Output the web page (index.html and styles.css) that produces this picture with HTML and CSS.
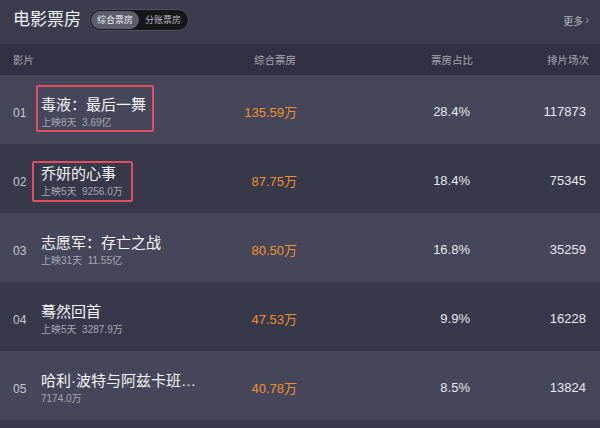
FILE: index.html
```html
<!DOCTYPE html>
<html lang="zh">
<head>
<meta charset="utf-8">
<link rel="stylesheet" href="styles.css">
</head>
<body>
<div class="panel">
  <div class="top">
    <div class="title">电影票房</div>
    <div class="tabs">
      <span class="tab active">综合票房</span>
      <span class="tab">分账票房</span>
    </div>
    <div class="more">更多<span class="chev">&gt;</span></div>
  </div>
  <div class="row head">
    <div class="c-film-h">影片</div>
    <div class="c-box">综合票房</div>
    <div class="c-ratio">票房占比</div>
    <div class="c-count">排片场次</div>
  </div>
  <div class="row light">
    <div class="c-rank">01</div>
    <div class="c-film"><div class="film mark1"><div class="name">毒液：最后一舞</div><div class="sub">上映8天&nbsp;&nbsp;3.69亿</div></div></div>
    <div class="c-box num">135.59万</div>
    <div class="c-ratio">28.4%</div>
    <div class="c-count">117873</div>
  </div>
  <div class="row dark">
    <div class="c-rank">02</div>
    <div class="c-film"><div class="film mark2"><div class="name">乔妍的心事</div><div class="sub">上映5天&nbsp;&nbsp;9256.0万</div></div></div>
    <div class="c-box num">87.75万</div>
    <div class="c-ratio">18.4%</div>
    <div class="c-count">75345</div>
  </div>
  <div class="row light">
    <div class="c-rank">03</div>
    <div class="c-film"><div class="film"><div class="name">志愿军：存亡之战</div><div class="sub">上映31天&nbsp;&nbsp;11.55亿</div></div></div>
    <div class="c-box num">80.50万</div>
    <div class="c-ratio">16.8%</div>
    <div class="c-count">35259</div>
  </div>
  <div class="row dark">
    <div class="c-rank">04</div>
    <div class="c-film"><div class="film"><div class="name">蓦然回首</div><div class="sub">上映5天&nbsp;&nbsp;3287.9万</div></div></div>
    <div class="c-box num">47.53万</div>
    <div class="c-ratio">9.9%</div>
    <div class="c-count">16228</div>
  </div>
  <div class="row light">
    <div class="c-rank">05</div>
    <div class="c-film"><div class="film"><div class="name">哈利·波特与阿兹卡班…</div><div class="sub">7174.0万</div></div></div>
    <div class="c-box num">40.78万</div>
    <div class="c-ratio">8.5%</div>
    <div class="c-count">13824</div>
  </div>
</div>
</body>
</html>
```

FILE: styles.css
```css
html, body {
  margin: 0;
  padding: 0;
  background: #37384a;
}
body {
  width: 600px;
  height: 428px;
  overflow: hidden;
  font-family: "Liberation Sans", "Noto Sans CJK SC", sans-serif;
  color: #e8e8ec;
}
.panel {
  display: flex;
  flex-direction: column;
}
.top {
  height: 44px;
  background: #3a3b4d;
  display: flex;
  align-items: center;
  padding: 0 10px 0 13px;
  box-sizing: border-box;
}
.title {
  font-size: 17px;
  line-height: 20px;
  color: #f2f2f4;
  margin-top: -4px;
}
.tabs {
  margin-left: 8px;
  margin-top: -4px;
  display: flex;
  align-items: center;
  height: 22px;
  box-sizing: border-box;
  padding: 1px;
  background: #16161d;
  border: 1px solid #505062;
  border-radius: 11px;
}
.tab {
  font-size: 9px;
  line-height: 18px;
  padding: 0 6px;
  color: #b8b8c0;
  border-radius: 9px;
}
.tab.active {
  background: #5c5c6b;
  color: #eeeef2;
}
.more {
  margin-left: auto;
  font-size: 10px;
  color: #b4b4bc;
  margin-top: -4px;
  display: flex;
  align-items: center;
}
.chev {
  font-size: 10px;
  margin-left: 1px;
  color: #9a9aa4;
  transform: scaleX(0.6);
}
.row {
  display: grid;
  grid-template-columns: 28px 172px 84px 173px 116px;
  align-items: center;
  padding-left: 13px;
  box-sizing: border-box;
}
.head {
  height: 31px;
  background: #303142;
  font-size: 10.5px;
  color: #a8a8b2;
}
.c-film-h {
  grid-column: 1 / 3;
}
.light {
  height: 69px;
  background: #45465a;
}
.dark {
  height: 69px;
  background: #37384a;
}
.c-rank {
  font-size: 12px;
  color: #c8c8d0;
  padding-top: 6px;
}
.c-box, .c-ratio, .c-count {
  text-align: right;
}
.light .c-box, .dark .c-box,
.light .c-ratio, .dark .c-ratio,
.light .c-count, .dark .c-count {
  font-size: 13px;
  padding-top: 3px;
}
.head .c-box { margin-right: 1px; }
.head .c-ratio { margin-right: -3px; }
.head .c-count { margin-right: -3px; }
.num {
  color: #f0912e;
}
.c-film {
  display: flex;
}
.film {
  position: relative;
  display: flex;
  flex-direction: column;
  gap: 2px;
  padding-top: 4px;
}
.name {
  font-size: 15px;
  line-height: 20px;
  color: #f4f4f6;
  white-space: nowrap;
}
.sub {
  font-size: 10px;
  line-height: 12px;
  color: #a8a8b2;
}
.mark1::after, .mark2::after {
  content: "";
  position: absolute;
  border: 2px solid #e04f5f;
  border-radius: 2px;
}
.mark1::after {
  left: -5px;
  right: -8px;
  top: -6px;
  bottom: -3px;
}
.mark2::after {
  left: -9px;
  right: -10px;
  top: 1px;
  bottom: -4px;
}
```
